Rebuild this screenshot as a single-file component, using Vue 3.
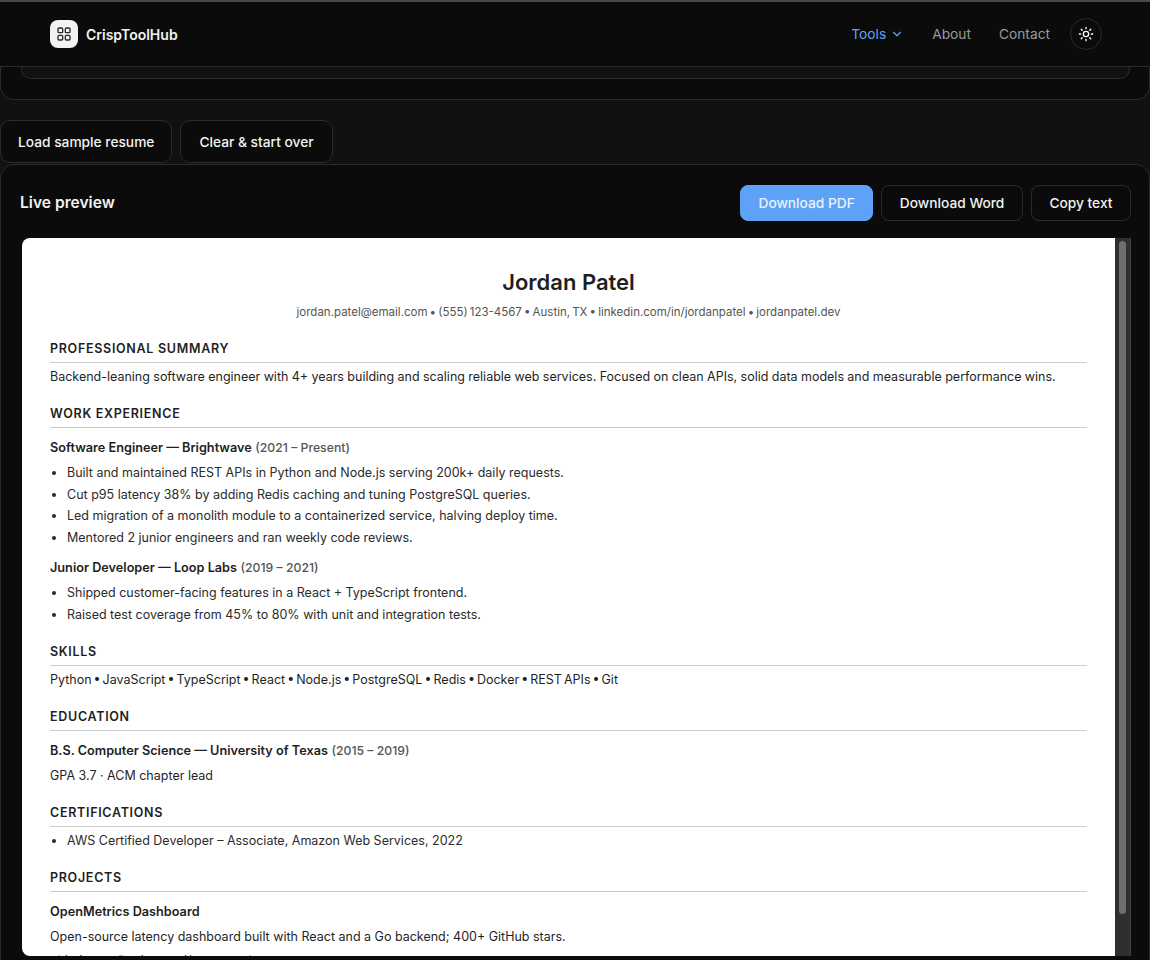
<template>
  <div class="page">
    <header class="topbar">
      <div class="brand">
        <span class="logo">
          <svg width="16" height="16" viewBox="0 0 24 24" fill="none" stroke="#2a2a2a" stroke-width="2" stroke-linejoin="round">
            <rect x="3" y="3" width="7" height="7" rx="1.5" />
            <rect x="14" y="3" width="7" height="7" rx="1.5" />
            <rect x="3" y="14" width="7" height="7" rx="1.5" />
            <rect x="14" y="14" width="7" height="7" rx="1.5" />
          </svg>
        </span>
        <span class="brand-name">CrispToolHub</span>
      </div>
      <nav class="nav">
        <a class="nav-link active">
          Tools
          <svg width="14" height="14" viewBox="0 0 24 24" fill="none" stroke="currentColor" stroke-width="2" stroke-linecap="round" stroke-linejoin="round">
            <path d="M6 9l6 6 6-6" />
          </svg>
        </a>
        <a class="nav-link">About</a>
        <a class="nav-link">Contact</a>
        <button class="theme">
          <svg width="16" height="16" viewBox="0 0 24 24" fill="none" stroke="#fff" stroke-width="2" stroke-linecap="round">
            <circle cx="12" cy="12" r="4" />
            <path d="M12 2v2M12 20v2M4.9 4.9l1.4 1.4M17.7 17.7l1.4 1.4M2 12h2M20 12h2M4.9 19.1l1.4-1.4M17.7 6.3l1.4-1.4" />
          </svg>
        </button>
      </nav>
    </header>

    <div class="prev-card">
      <div class="prev-inner"></div>
    </div>

    <div class="actions">
      <button class="btn big">Load sample resume</button>
      <button class="btn big">Clear &amp; start over</button>
    </div>

    <section class="card">
      <div class="card-head">
        <h2>Live preview</h2>
        <div class="card-actions">
          <button class="btn primary">Download PDF</button>
          <button class="btn">Download Word</button>
          <button class="btn">Copy text</button>
        </div>
      </div>

      <div class="preview">
        <article class="resume">
          <h1>{{ resume.name }}</h1>
          <p class="contact">{{ resume.contact }}</p>

          <h3>Professional Summary</h3>
          <p class="summary">{{ resume.summary }}</p>

          <h3>Work Experience</h3>
          <template v-for="job in resume.jobs" :key="job.title">
            <p class="role"><b>{{ job.title }}</b> <span>({{ job.dates }})</span></p>
            <ul>
              <li v-for="item in job.items" :key="item">{{ item }}</li>
            </ul>
          </template>

          <h3>Skills</h3>
          <p class="skills">{{ resume.skills }}</p>

          <h3>Education</h3>
          <p class="role"><b>B.S. Computer Science — University of Texas</b> <span>(2015 – 2019)</span></p>
          <p>GPA 3.7 · ACM chapter lead</p>

          <h3>Certifications</h3>
          <ul>
            <li>AWS Certified Developer – Associate, Amazon Web Services, 2022</li>
          </ul>

          <h3>Projects</h3>
          <p class="role"><b>OpenMetrics Dashboard</b></p>
          <p>Open-source latency dashboard built with React and a Go backend; 400+ GitHub stars.</p>
          <p>github.com/jordanpatel/openmetrics</p>
        </article>
        <div class="rail">
          <div class="thumb"></div>
        </div>
      </div>
    </section>
  </div>
</template>

<script setup>
const resume = {
  name: 'Jordan Patel',
  contact: 'jordan.patel@email.com • (555) 123-4567 • Austin, TX • linkedin.com/in/jordanpatel • jordanpatel.dev',
  summary: 'Backend-leaning software engineer with 4+ years building and scaling reliable web services. Focused on clean APIs, solid data models and measurable performance wins.',
  jobs: [
    {
      title: 'Software Engineer — Brightwave',
      dates: '2021 – Present',
      items: [
        'Built and maintained REST APIs in Python and Node.js serving 200k+ daily requests.',
        'Cut p95 latency 38% by adding Redis caching and tuning PostgreSQL queries.',
        'Led migration of a monolith module to a containerized service, halving deploy time.',
        'Mentored 2 junior engineers and ran weekly code reviews.'
      ]
    },
    {
      title: 'Junior Developer — Loop Labs',
      dates: '2019 – 2021',
      items: [
        'Shipped customer-facing features in a React + TypeScript frontend.',
        'Raised test coverage from 45% to 80% with unit and integration tests.'
      ]
    }
  ],
  skills: 'Python • JavaScript • TypeScript • React • Node.js • PostgreSQL • Redis • Docker • REST APIs • Git'
}
</script>

<style>
html, body {
  margin: 0;
  background: #111111;
}
</style>

<style scoped>
.page {
  height: 960px;
  overflow: hidden;
  background: #111111;
  font-family: Inter, "Liberation Sans", sans-serif;
  color: #f2f2f2;
}

.topbar {
  box-sizing: border-box;
  height: 67px;
  padding: 0 48px 0 50px;
  display: flex;
  align-items: center;
  justify-content: space-between;
  background: #0b0b0b;
  border-top: 2px solid #4a4a4a;
  border-bottom: 1px solid #2b2b2b;
}

.brand {
  display: flex;
  align-items: center;
  gap: 8px;
}

.logo {
  width: 28px;
  height: 28px;
  border-radius: 8px;
  background: #f2f2f2;
  display: flex;
  align-items: center;
  justify-content: center;
}

.brand-name {
  font-size: 14px;
  font-weight: 600;
}

.nav {
  display: flex;
  align-items: center;
  gap: 28px;
}

.nav-link {
  display: flex;
  align-items: center;
  gap: 4px;
  font-size: 13.75px;
  color: #9a9a9a;
}

.nav-link.active {
  color: #5ea2f8;
}

.theme {
  width: 32px;
  height: 32px;
  margin-left: -8px;
  padding: 0;
  border-radius: 50%;
  border: 1px solid #2b2b2b;
  background: #0b0b0b;
  display: flex;
  align-items: center;
  justify-content: center;
}

.prev-card {
  box-sizing: border-box;
  height: 33px;
  padding: 0 19px 0 20px;
  background: #0b0b0b;
  border: 1px solid #2b2b2b;
  border-top: 0;
  border-radius: 0 0 14px 14px;
}

.prev-inner {
  height: 11px;
  background: #111111;
  border: 1px solid #2b2b2b;
  border-top: 0;
  border-radius: 0 0 10px 10px;
}

.actions {
  display: flex;
  gap: 8px;
  margin-top: 20px;
  margin-bottom: 1px;
}

.btn {
  box-sizing: border-box;
  height: 36px;
  padding: 0 17.5px;
  border-radius: 8px;
  border: 1px solid #2b2b2b;
  background: #0b0b0b;
  color: #f2f2f2;
  font-family: inherit;
  font-size: 13.75px;
  font-weight: 500;
}

.btn.big {
  height: 43px;
  padding: 0 17px;
  border-radius: 10px;
}

.btn.big + .btn.big {
  padding: 0 18px;
}

.btn.primary {
  background: #5ea2f8;
  border-color: #5ea2f8;
  color: #eaf3ff;
}

.card {
  box-sizing: border-box;
  height: 820px;
  padding: 20px 18px 0 19px;
  background: #0b0b0b;
  border: 1px solid #2b2b2b;
  border-radius: 14px;
}

.card-head {
  display: flex;
  align-items: center;
  justify-content: space-between;
  height: 36px;
}

h2 {
  margin: -2px 0 0;
  font-size: 15.6px;
  font-weight: 600;
}

.card-actions {
  display: flex;
  gap: 8px;
}

.preview {
  display: flex;
  height: 718px;
  margin-top: 17px;
  margin-left: 2px;
  overflow: hidden;
  background: #fff;
  border-radius: 8px 0 0 8px;
}

.rail {
  box-sizing: border-box;
  flex: 0 0 16px;
  padding: 3px 4px 0;
  background: #2f2f2f;
  border-right: 1px solid #444;
}

.thumb {
  height: 673px;
  background: #6e6e6e;
  border-radius: 4px;
}

.resume {
  flex: 1;
  min-width: 0;
  height: 718px;
  box-sizing: border-box;
  overflow: hidden;
  padding: 27px 28px 0;
  color: #1f1f1f;
  font-size: 12.5px;
  line-height: 20px;
}

h1 {
  margin: 0;
  text-align: center;
  font-size: 22px;
  font-weight: 600;
  line-height: 34px;
}

.resume .contact {
  margin: 3px 0 0;
  text-align: center;
  font-size: 11.5px;
  word-spacing: -1.1px;
  color: #555;
}

h3 {
  margin: 18px 0 4px;
  padding-bottom: 4px;
  border-bottom: 1px solid #ccc;
  font-size: 12.5px;
  font-weight: 600;
  line-height: 18px;
  letter-spacing: 0.7px;
  text-transform: uppercase;
}

.resume p {
  margin: 0 0 4px;
}

.resume .summary {
  word-spacing: -0.15px;
}

.resume .skills {
  word-spacing: -1.5px;
}

.role b {
  font-size: 12.7px;
  font-weight: 600;
}

.role span {
  font-size: 12.25px;
  color: #555;
  font-weight: 500;
}

.resume .role {
  margin-top: 10px;
  margin-bottom: 5px;
}

ul {
  margin: 0 0 8px;
  padding-left: 17px;
  color: #2b2b2b;
}

li {
  margin-bottom: 1.67px;
}
</style>
